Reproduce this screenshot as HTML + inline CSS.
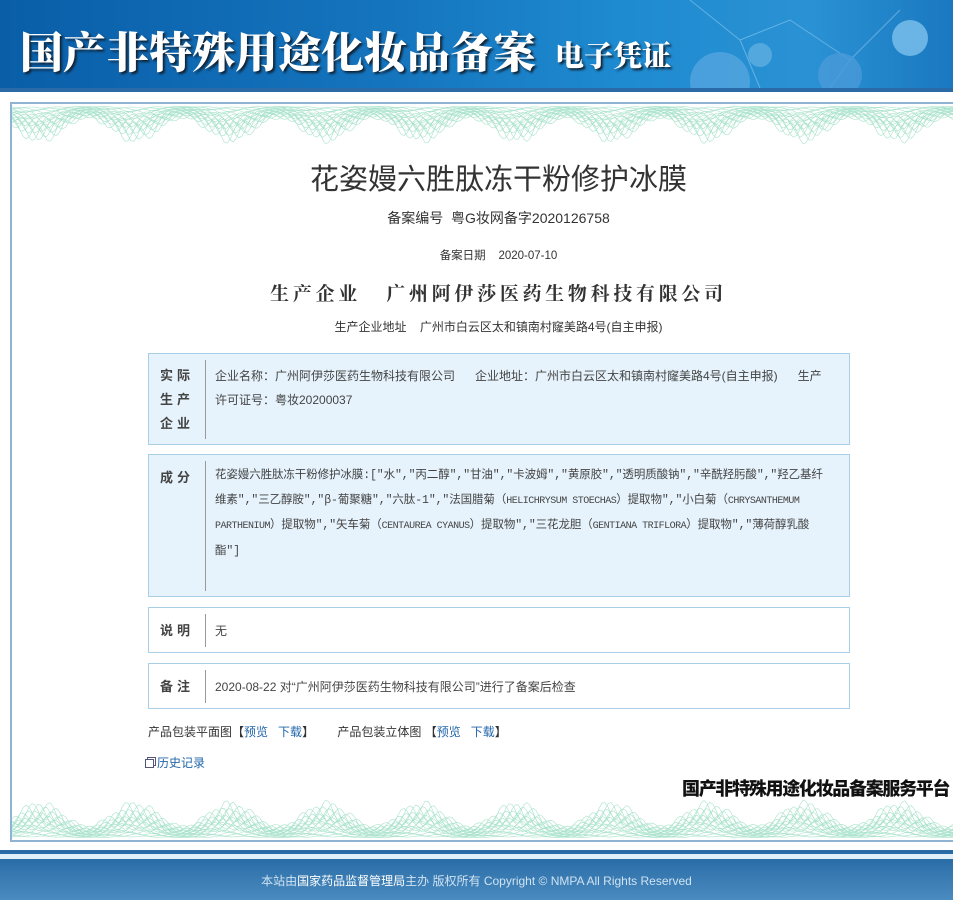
<!DOCTYPE html>
<html><head><meta charset="utf-8">
<style>
*{margin:0;padding:0;box-sizing:border-box}
body{width:953px;height:900px;overflow:hidden;background:#fff;font-family:"Liberation Sans","Noto Sans CJK SC",sans-serif;color:#333;font-size:12px;position:relative}
.abs{position:absolute}
#hdr{left:0;top:0;width:953px;height:88px;background:linear-gradient(90deg,#0a5ea8 0%,#1474bd 40%,#1e8ad0 65%,#2a92d4 85%,#1a78c0 100%)}
#hdrband{left:0;top:88px;width:953px;height:4px;background:#2a6aa6}
#frame{left:10px;top:102px;width:950px;height:740px;border:2px solid #8fb3d3;border-right:none}
.box{position:absolute;left:148px;width:702px;border:1px solid #a9cfe6}
.lab{position:absolute;left:0;width:56px;text-align:center;font-weight:bold;color:#444;font-size:13px;line-height:24px;letter-spacing:4px}
.div{position:absolute;left:56px;width:1px;background:#999}
.txt{position:absolute;left:66px;right:12px;font-size:12px;line-height:24px;color:#444}
.en{font-size:10px;letter-spacing:-.5px}
a{color:#2266aa;text-decoration:none}
</style></head><body>
<div id="hdr" class="abs">
<svg width="953" height="88" style="position:absolute;left:0;top:0">
<g stroke="#8cc8ee" stroke-width="1" opacity=".6" fill="none"><path d="M690 0 L740 40 L790 20 L850 60 L900 10 M740 40 L760 88 M850 60 L830 88"/></g>
<circle cx="720" cy="82" r="30" fill="#5aa8e0" opacity=".7"/><circle cx="840" cy="75" r="22" fill="#4a9ad8" opacity=".8"/><circle cx="910" cy="38" r="18" fill="#6ab4e6"/>
<circle cx="760" cy="55" r="12" fill="#7fc0ea" opacity=".5"/>
</svg>
<div class="abs" style="left:20px;top:20px;font-family:'Noto Serif CJK SC','Noto Sans CJK SC',serif;font-weight:900;font-size:43px;color:#fff;letter-spacing:0;text-shadow:2px 2px 2px #123;white-space:nowrap">国产非特殊用途化妆品备案</div>
<div class="abs" style="left:555px;top:34px;font-family:'Noto Serif CJK SC','Noto Sans CJK SC',serif;font-weight:900;font-size:29px;color:#fff;text-shadow:2px 2px 2px #123;white-space:nowrap">电子凭证</div>
</div>
<div id="hdrband" class="abs"></div>
<div id="frame" class="abs"></div>
<svg id="gt" class="abs" style="left:12px;top:104px" width="941" height="42"></svg>
<svg id="gb" class="abs" style="left:12px;top:798px" width="941" height="42"></svg>

<div class="abs" style="left:0;width:997px;top:156px;text-align:center;font-size:29px;color:#333">花姿嫚六胜肽冻干粉修护冰膜</div>
<div class="abs" style="left:0;width:997px;top:208px;text-align:center;font-size:14px;color:#333">备案编号&nbsp;&nbsp;粤G妆网备字2020126758</div>
<div class="abs" style="left:0;width:997px;top:247px;text-align:center;font-size:11.5px;color:#333">备案日期&nbsp;&nbsp;&nbsp;&nbsp;2020-07-10</div>
<div class="abs" style="left:0;width:997px;top:279px;text-align:center;font-size:19px;font-weight:bold;letter-spacing:3.7px;color:#333;font-family:'Liberation Serif','Noto Serif CJK SC',serif">生产企业&nbsp;&nbsp;&nbsp;广州阿伊莎医药生物科技有限公司</div>
<div class="abs" style="left:0;width:997px;top:318px;text-align:center;font-size:12px;color:#333">生产企业地址&nbsp;&nbsp;&nbsp;&nbsp;广州市白云区太和镇南村窿美路4号(自主申报)</div>

<div class="box" style="top:353px;height:92px;background:#e6f3fc">
<div class="lab" style="top:10px">实际<br>生产<br>企业</div><div class="div" style="top:6px;height:79px"></div>
<div class="txt" style="top:10px;right:18px">企业名称：广州阿伊莎医药生物科技有限公司&nbsp;&nbsp;&nbsp;&nbsp;&nbsp;&nbsp;企业地址：广州市白云区太和镇南村窿美路4号(自主申报)&nbsp;&nbsp;&nbsp;&nbsp;&nbsp;&nbsp;生产许可证号：粤妆20200037</div>
</div>
<div class="box" style="top:454px;height:143px;background:#e6f3fc">
<div class="lab" style="top:11px">成分</div><div class="div" style="top:6px;height:130px"></div>
<div class="txt" style="top:9px;right:20px;font-size:11.5px;line-height:24.5px;font-family:'Liberation Mono','Noto Sans CJK SC',monospace;letter-spacing:-.1px">花姿嫚六胜肽冻干粉修护冰膜:["水","丙二醇","甘油","卡波姆","黄原胶","透明质酸钠","辛酰羟肟酸","羟乙基纤维素","三乙醇胺","β-葡聚糖","六肽-1","法国腊菊（<span class="en">HELICHRYSUM STOECHAS</span>）提取物","小白菊（<span class="en">CHRYSANTHEMUM PARTHENIUM</span>）提取物","矢车菊（<span class="en">CENTAUREA CYANUS</span>）提取物","三花龙胆（<span class="en">GENTIANA TRIFLORA</span>）提取物","薄荷醇乳酸酯"]</div>
</div>
<div class="box" style="top:607px;height:46px">
<div class="lab" style="top:11px">说明</div><div class="div" style="top:6px;height:33px"></div>
<div class="txt" style="top:11px">无</div>
</div>
<div class="box" style="top:663px;height:46px">
<div class="lab" style="top:11px">备注</div><div class="div" style="top:6px;height:33px"></div>
<div class="txt" style="top:11px">2020-08-22 对“广州阿伊莎医药生物科技有限公司”进行了备案后检查</div>
</div>
<div class="abs" style="left:148px;top:723px;font-size:12px;color:#333">产品包装平面图【<a>预览</a>&nbsp;&nbsp;&nbsp;<a>下载</a>】&nbsp;&nbsp;&nbsp;&nbsp;&nbsp;&nbsp;&nbsp;产品包装立体图 【<a>预览</a>&nbsp;&nbsp;&nbsp;<a>下载</a>】</div>
<div class="abs" style="left:145px;top:754px;font-size:12px"><span style="display:inline-block;width:9px;height:9px;border:1px solid #557;margin-right:3px;vertical-align:-1px;box-shadow:2px -2px 0 -1px #fff,2px -2px 0 0 #557"></span><a>历史记录</a></div>
<div class="abs" style="left:682px;top:775px;font-size:18px;font-weight:900;color:#111;letter-spacing:-1.3px;white-space:nowrap">国产非特殊用途化妆品备案服务平台</div>

<div class="abs" style="left:0;top:850px;width:953px;height:4px;background:#2a6aa6"></div>
<div class="abs" style="left:0;top:854px;width:953px;height:5px;background:#dfeef8"></div>
<div class="abs" style="left:0;top:859px;width:953px;height:41px;background:linear-gradient(#2a6ca6,#4a8cc0);color:#cfe3f2;font-size:12px;text-align:center;line-height:44px">本站由<span style="color:#fff">国家药品监督管理局</span>主办 版权所有 Copyright © NMPA All Rights Reserved</div>
<script>
function g(id,top){var s=document.getElementById(id),h='';var P=95.5;
for(var k=0;k<18;k++){var t=(k+1)/18,ph=k*7,d='';for(var x=-10;x<=945;x+=3){var env=0.35+0.65*(1-Math.cos(2*Math.PI*(x+20)/P))/2;var a=env*38*t*(0.75+0.25*Math.sin((x+ph)*0.25));var y=top?(2+a):(40-a);d+=(x==-10?'M':'L')+x+' '+y.toFixed(1)+' ';}
h+='<path d="'+d+'" fill="none" stroke="#a8e2cc" stroke-width=".6"/>';}
s.innerHTML=h;}
g('gt',1);g('gb',0);
</script>
</body></html>
